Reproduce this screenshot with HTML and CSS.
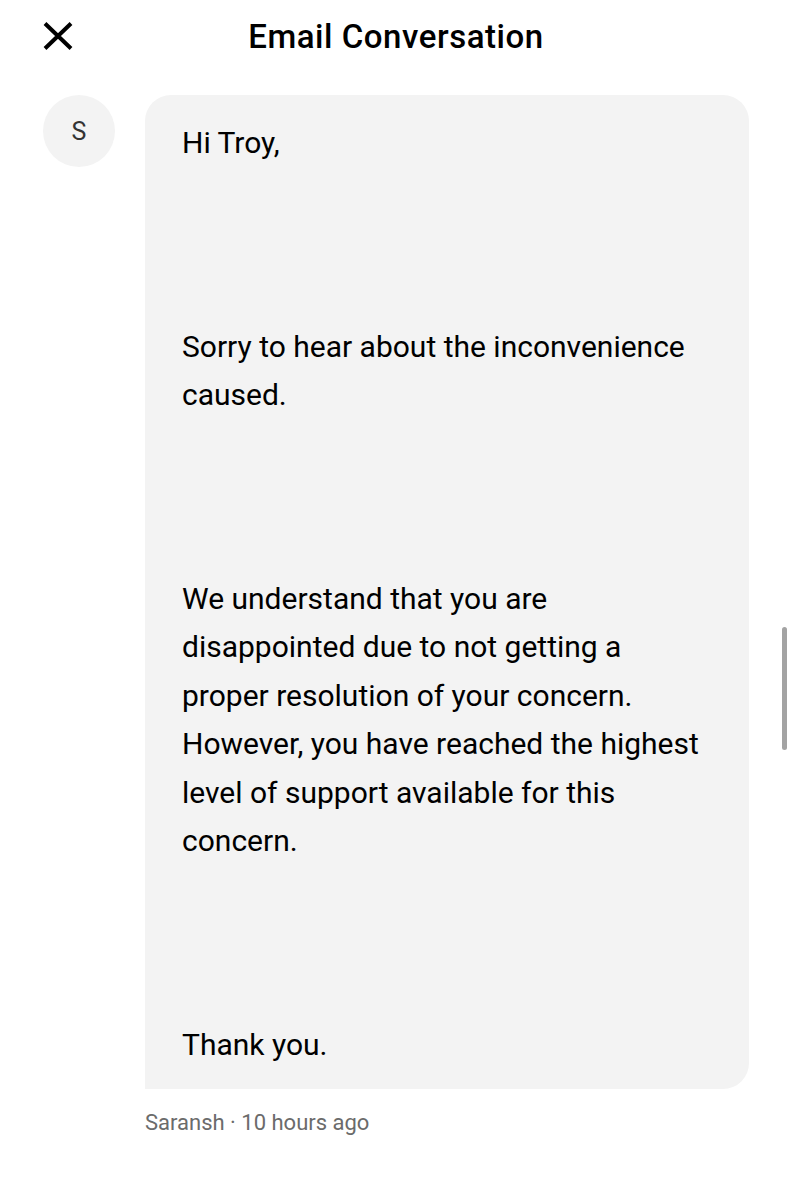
FILE: index.html
```html
<!DOCTYPE html>
<html>
<head>
<meta charset="utf-8">
<link rel="stylesheet" href="styles.css">
</head>
<body>
<header class="topbar">
  <button class="close" aria-label="Close">
    <svg width="30" height="28" viewBox="0 0 30 28"><path d="M2 1.5 L28 26.5 M28 1.5 L2 26.5" stroke="#000" stroke-width="4" stroke-linecap="butt" fill="none"/></svg>
  </button>
  <h1 class="title">Email Conversation</h1>
</header>
<main class="thread">
  <div class="message">
    <div class="avatar">S</div>
    <div class="content">
      <div class="bubble">
        <p>Hi Troy,</p>
        <p>Sorry to hear about the inconvenience caused.</p>
        <p>We understand that you are disappointed due to not getting a proper resolution of your concern. However, you have reached the highest level of support available for this concern.</p>
        <p>Thank you.</p>
      </div>
      <div class="meta">Saransh · 10 hours ago</div>
    </div>
  </div>
</main>
<div class="scrollbar"></div>
</body>
</html>
```
FILE: styles.css
```css
html, body {
  margin: 0;
  padding: 0;
  background: #fff;
  font-family: Roboto, "Liberation Sans", sans-serif;
  color: #000;
}
.topbar {
  height: 72px;
  position: relative;
  display: flex;
  align-items: center;
  justify-content: center;
}
.close {
  position: absolute;
  left: 43px;
  top: 22px;
  border: 0;
  background: none;
  padding: 0;
  width: 30px;
  height: 28px;
}
.close svg { display: block; }
.title {
  margin: 0;
  font-size: 33px;
  font-weight: 500;
  letter-spacing: 0.55px;
}
.thread {
  padding: 23px 43px 0 43px;
}
.message {
  display: flex;
  gap: 30px;
  align-items: flex-start;
}
.avatar {
  flex: none;
  width: 72px;
  height: 72px;
  border-radius: 50%;
  background: #f3f3f3;
  display: flex;
  align-items: center;
  justify-content: center;
  font-size: 25px;
  color: #333;
}
.content {
  flex: 1;
}
.bubble {
  background: #f3f3f3;
  border-radius: 26px 26px 26px 0;
  padding: 24px 37px 20px 37px;
}
.bubble p {
  margin: 0 0 155px 0;
  font-size: 30px;
  line-height: 48.5px;
}
.bubble p:last-child { margin-bottom: 0; }
.meta {
  margin-top: 21px;
  font-size: 22px;
  color: #6b6b6b;
  line-height: 26px;
}
.scrollbar {
  position: absolute;
  left: 782px;
  top: 627px;
  width: 5px;
  height: 123px;
  border-radius: 3px;
  background: #a3a3a3;
}
```
